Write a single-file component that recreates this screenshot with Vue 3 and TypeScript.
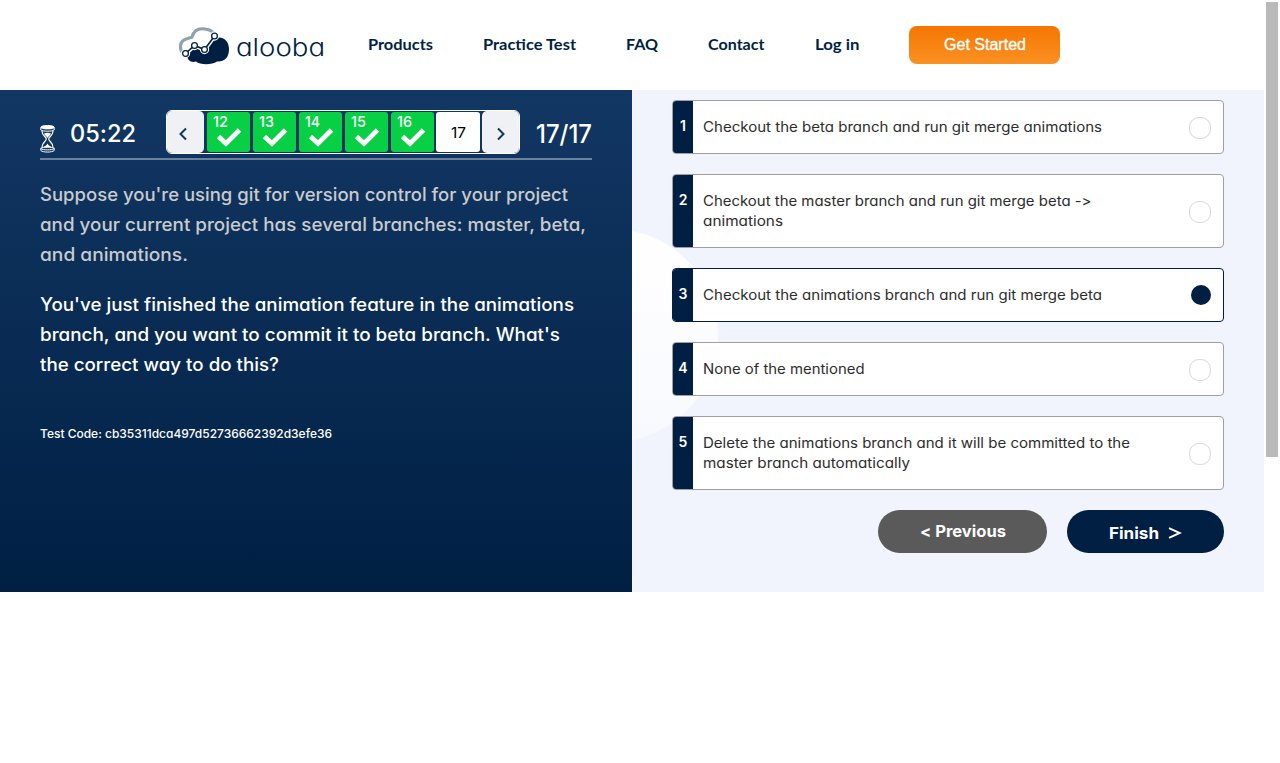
<script setup lang="ts">
import { ref } from 'vue'

interface NavLink { label: string; width: number }
interface Line { text: string; width: number }
interface Answer { id: number; lines: Line[] }

const links: NavLink[] = [
  { label: 'Products', width: 65 },
  { label: 'Practice Test', width: 93 },
  { label: 'FAQ', width: 32 },
  { label: 'Contact', width: 56.5 },
  { label: 'Log in', width: 44.5 },
]

const done: number[] = [12, 13, 14, 15, 16]

const intro: Line[] = [
  { text: "Suppose you're using git for version control for your project", width: 528 },
  { text: 'and your current project has several branches: master, beta,', width: 546 },
  { text: 'and animations.', width: 148 },
]

const question: Line[] = [
  { text: "You've just finished the animation feature in the animations", width: 534 },
  { text: "branch, and you want to commit it to beta branch. What's", width: 520 },
  { text: 'the correct way to do this?', width: 239 },
]

const answers: Answer[] = [
  { id: 1, lines: [{ text: 'Checkout the beta branch and run git merge animations', width: 399 }] },
  { id: 2, lines: [
    { text: 'Checkout the master branch and run git merge beta ->', width: 388.5 },
    { text: 'animations', width: 80 },
  ] },
  { id: 3, lines: [{ text: 'Checkout the animations branch and run git merge beta', width: 399 }] },
  { id: 4, lines: [{ text: 'None of the mentioned', width: 161.5 }] },
  { id: 5, lines: [
    { text: 'Delete the animations branch and it will be committed to the', width: 427 },
    { text: 'master branch automatically', width: 207 },
  ] },
]

const selected = ref(3)

// Widens or narrows a single line of text to the given measure.
const vFit = {
  mounted(el: HTMLElement, binding: { value: number }) {
    const natural = el.getBoundingClientRect().width
    if (natural > 0) {
      el.style.width = `${binding.value}px`
      el.style.transform = `scaleX(${binding.value / natural})`
    }
  },
}
</script>

<template>
  <div class="page">
    <header class="header">
      <a class="logo">
        <svg class="cloud" width="52" height="40" viewBox="0 0 52 40">
          <path d="M4 27C0 23 0 14 9 12.500C11 11.500 12 12 13 11C15 4 20 2 26 3C31 3.500 35 6 37 10" fill="none" stroke="#8ca3ae" stroke-width="3.200" />
          <path d="M8 29L17 19L26 24L37 12C45 10 50 16 50 23C50 32 45 36 38 35.500C33 39 21 39 17 35.500C12 37 8 34 8 29Z" fill="#001f43" />
          <path d="M6.500 27.500L15.500 19.500L25.500 23.500L35.500 10" fill="none" stroke="#fff" stroke-width="4.500" />
          <g fill="#fff" stroke="#fff" stroke-width="3.500">
            <circle cx="6.500" cy="27.500" r="2.900" /><circle cx="15.500" cy="19.500" r="2.900" />
            <circle cx="25.500" cy="23.500" r="2.900" /><circle cx="35.500" cy="10" r="2.900" />
          </g>
          <path d="M6.500 27.500L15.500 19.500L25.500 23.500L35.500 10" fill="none" stroke="#001f43" stroke-width="1.600" />
          <g fill="#fff" stroke="#001f43" stroke-width="1.300">
            <circle cx="6.500" cy="27.500" r="2.900" /><circle cx="15.500" cy="19.500" r="2.900" />
            <circle cx="25.500" cy="23.500" r="2.900" /><circle cx="35.500" cy="10" r="2.900" />
          </g>
        </svg>
        <span v-fit="89" class="fit wordmark">alooba</span>
      </a>
      <nav class="links">
        <a v-for="l in links" :key="l.label" class="link"><span v-fit="l.width" class="fit">{{ l.label }}</span></a>
      </nav>
      <a class="cta"><span v-fit="82" class="fit">Get Started</span></a>
    </header>

    <main class="quiz">
      <section class="left">
        <div class="status">
          <svg class="hourglass" width="15" height="28" viewBox="0 0 15 28" fill="none" stroke="#fff">
            <ellipse cx="7.500" cy="2.200" rx="6.700" ry="1.700" fill="#fff" stroke-width="1" />
            <path d="M.8 2.500V5C3 6.600 12 6.600 14.200 5V2.500" stroke-width="1" />
            <path d="M2 6C2 11 6.300 11.500 6.300 14C6.300 16.500 2 17 2 22.500M13 6C13 11 8.700 11.500 8.700 14C8.700 16.500 13 17 13 22.500" stroke-width="1.200" />
            <path d="M4 8.500C6 7.500 9 7.500 11 8.500C10.500 10.500 8.500 11 7.500 13C6.500 11 4.500 10.500 4 8.500Z" fill="#fff" stroke="none" />
            <path d="M3.200 22.500C4 21 6.500 21 7.500 18.500C8.500 21 11 21 11.800 22.500Z" fill="#fff" stroke="none" />
            <path d="M.8 23.200C3 21.800 12 21.800 14.200 23.200V25.500C12 27.600 3 27.600 .8 25.500ZM.8 23.500C3 25.300 12 25.300 14.200 23.500" stroke-width="1" />
          </svg>
          <span class="time"><span v-fit="66" class="fit">05:22</span></span>
          <div class="pager">
            <button class="arrow">
              <svg width="10" height="14" viewBox="0 0 10 14"><path d="M8 1.500L2.500 7L8 12.500" fill="none" stroke="#123660" stroke-width="2" /></svg>
            </button>
            <div class="tiles">
              <div v-for="n in done" :key="n" class="tile">
                <span v-fit="15" class="fit num">{{ n }}</span>
                <svg class="check" width="26" height="20" viewBox="0 0 26 20"><path d="M2.500 9.500L10 16.500L23.500 3" fill="none" stroke="#fff" stroke-width="4.800" /></svg>
              </div>
              <div class="tile current"><span v-fit="15" class="fit">17</span></div>
            </div>
            <button class="arrow next">
              <svg width="10" height="14" viewBox="0 0 10 14"><path d="M2 1.500L7.500 7L2 12.500" fill="none" stroke="#123660" stroke-width="2" /></svg>
            </button>
          </div>
          <span class="count"><span v-fit="56" class="fit">17/17</span></span>
        </div>
        <p class="para intro"><span v-for="l in intro" :key="l.text" class="line"><span v-fit="l.width" class="fit">{{ l.text }}</span></span></p>
        <p class="para"><span v-for="l in question" :key="l.text" class="line"><span v-fit="l.width" class="fit">{{ l.text }}</span></span></p>
        <p class="code"><span v-fit="292" class="fit">Test Code: cb35311dca497d52736662392d3efe36</span></p>
      </section>

      <section class="right">
        <div class="disc"></div>
        <div class="answers">
          <div v-for="a in answers" :key="a.id" class="answer" :class="{ chosen: a.id === selected }" @click="selected = a.id">
            <span class="index">{{ a.id }}</span>
            <span class="text"><span v-for="l in a.lines" :key="l.text" class="line"><span v-fit="l.width" class="fit">{{ l.text }}</span></span></span>
            <span class="radio"></span>
          </div>
        </div>
        <div class="actions">
          <button class="pill prev"><span v-fit="86" class="fit">&lt; Previous</span></button>
          <button class="pill finish">
            <span v-fit="50" class="fit">Finish</span>
            <svg width="14" height="12" viewBox="0 0 14 12"><path d="M1 1.200L11.800 6L1 10.800" fill="none" stroke="#fff" stroke-width="2" /></svg>
          </button>
        </div>
      </section>
    </main>
    <div class="scrollbar"></div>
  </div>
</template>

<style>
body { margin: 0; background: #fff; overflow: hidden; }
</style>

<style scoped>
.page { position: relative; width: 1280px; height: 763px; overflow: hidden; background: #fff; font-family: Inter, "Open Sans", sans-serif; font-feature-settings: "cv11" 1, "calt" 0; }
.fit { display: inline-block; white-space: nowrap; text-align: left; transform-origin: 0 50%; }
/* The scale is relative to the natural width, so the origin stays at the left edge. */
.line { display: block; }
button { border: 0; padding: 0; font: inherit; font-feature-settings: inherit; cursor: pointer; }
.header { display: flex; align-items: center; height: 90px; padding-left: 179px; box-sizing: border-box; }
.logo { display: flex; align-items: center; width: 189px; color: #001f43; }
.cloud { flex: none; margin-top: 2px; }
.wordmark { flex: none; margin-left: 5px; font-size: 24px; font-weight: 350; line-height: 30px; margin-top: 5px; }
.links { display: flex; gap: 50px; margin: -2px 50px 0 0; }
.link { color: #001f43; font-family: Lato, sans-serif; font-size: 16px; font-weight: 700; line-height: 20px; }
.cta { display: flex; align-items: center; justify-content: center; width: 151px; height: 38px; border-radius: 8px; background: linear-gradient(#f57600, #fa9123); color: #fff; font: 16px/20px "Liberation Sans", Arial, sans-serif; -webkit-text-stroke: .35px #fff; }
.quiz { display: flex; width: 1264px; height: 502px; }
.left { box-sizing: border-box; width: 632px; padding: 20px 40px; background: linear-gradient(#123763, #001f43); color: #fff; }
.status { display: flex; align-items: flex-start; height: 48px; border-bottom: 2px solid #6b819c; }
.hourglass { flex: none; margin-top: 15px; }
.time { flex: none; width: 96px; margin-left: 15px; font-size: 24px; font-weight: 500; line-height: 48px; }
.pager { display: flex; flex: none; box-sizing: border-box; width: 354px; height: 44px; border: 1px solid #fff; border-radius: 6px; overflow: hidden; }
.arrow { display: flex; flex: none; box-sizing: border-box; align-items: center; justify-content: center; width: 37px; height: 42px; padding-right: 5px; border-radius: 0 5px 5px 0; background: #f0f1f4; }
.arrow.next { padding: 0; border-radius: 5px 0 0 5px; }
.arrow svg { margin-top: 4px; }
.tiles { display: flex; flex: none; gap: 2.600px; width: 273px; margin: 1px 2px 0 3px; }
.tile { position: relative; flex: none; width: 43.300px; height: 40px; border-radius: 3px; background: #08d044; font-size: 15px; font-weight: 500; }
.num { position: absolute; left: 6px; top: 0; line-height: 20px; }
.check { position: absolute; left: 9px; top: 15px; }
.current { display: flex; align-items: center; justify-content: center; background: #fff; color: #000; font-weight: 400; }
.count { flex: none; margin-left: 16px; font-size: 25px; font-weight: 500; line-height: 48px; }
.para { margin: 20px 0 0; font-size: 18px; font-weight: 480; line-height: 30px; }
.intro { color: #c9cbcd; }
.code { margin: 44px 0 0; font-size: 12px; font-weight: 500; line-height: 20px; }
.right { position: relative; box-sizing: border-box; width: 632px; padding: 10px 40px; overflow: hidden; background: #f2f4fd; }
.disc { position: absolute; left: -127px; top: 139px; width: 213px; height: 213px; border-radius: 50%; background: linear-gradient(#fff, #f8f9fe); }
.answers { position: relative; display: grid; gap: 20px; }
.answer { display: flex; border: 1px solid #a0a0a0; border-radius: 4px; overflow: hidden; background: #fff; color: #2c2c2c; font-size: 14px; line-height: 20px; }
.chosen { border-color: #001f43; }
.index { width: 20px; padding-top: 15px; background: #001f43; color: #fff; font-weight: 600; text-align: center; }
.text { flex: 1; padding: 16px 10px; }
.radio { align-self: center; box-sizing: border-box; width: 22px; height: 22px; margin: 2px 12px 0 0; border: 1px solid #d9d9d9; border-radius: 10px; }
.chosen .radio { width: 20px; height: 20px; margin-top: 0; border: 0; background: #001f43; }
.actions { display: flex; justify-content: flex-end; gap: 20px; margin-top: 20px; }
.pill { display: flex; align-items: center; justify-content: center; height: 43px; border-radius: 22px; color: #fff; font-size: 16px; font-weight: 700; }
.prev { width: 169px; padding-bottom: 1px; background: #5a5a5a; }
.finish { gap: 9px; width: 157px; background: #001f43; }
.finish .fit { margin-top: 3px; }
.finish svg { margin-top: 2px; }
.scrollbar { position: absolute; left: 1266px; top: 2px; width: 12px; height: 455px; background: #bababa; }
</style>
